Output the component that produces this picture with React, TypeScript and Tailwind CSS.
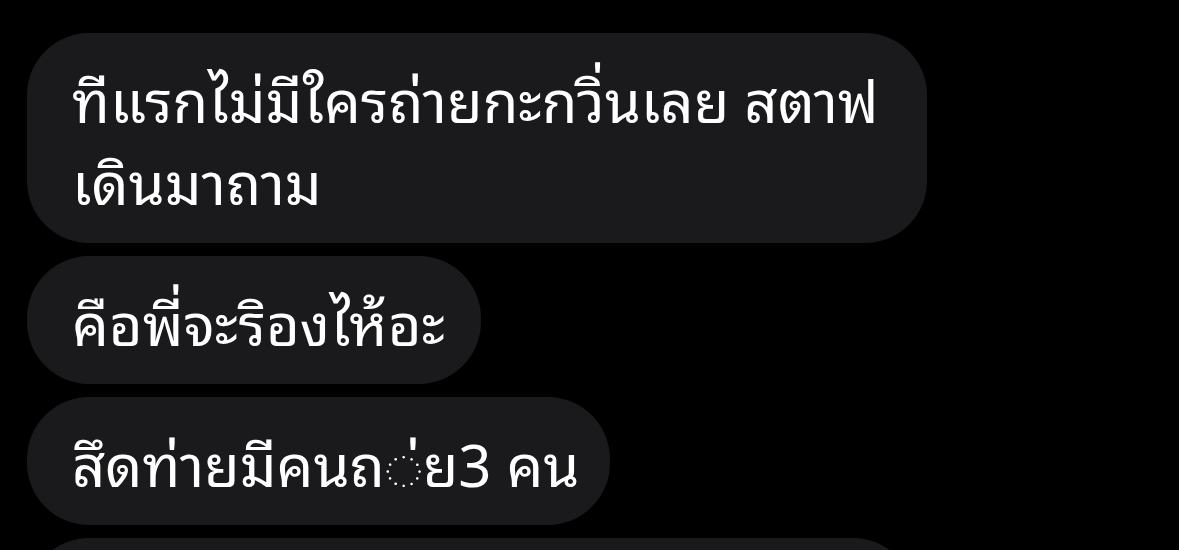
import React from "react";

const Bubble = ({ children, className = "" }: { children?: React.ReactNode; className?: string }) => (
  <div
    className={
      "rounded-[62px] bg-[#1a1a1c] pl-[45px] py-[23px] text-[58px] leading-[82px] text-white whitespace-nowrap " +
      className
    }
  >
    {children}
  </div>
);

export default function App() {
  return (
    <div
      className="w-[1179px] h-[550px] overflow-hidden bg-black pt-[33px] pl-[27px]"
      style={{ fontFamily: '"Noto Sans Thai Looped", "Noto Sans Thai", "Noto Sans", sans-serif' }}
    >
      <div className="flex flex-col items-start gap-[13px]">
        <Bubble className="w-[900px] pr-[44px]">
          <div>ทีแรกไม่มีใครถ่ายกะกวิ่นเลย สตาฟ</div>
          <div>เดินมาถาม</div>
        </Bubble>
        <Bubble className="pr-[36px]">คือพี่จะริองไห้อะ</Bubble>
        <Bubble className="pr-[30px]">สึดท่ายมีคนถ{"\u25CC\u0E48"}ย3 คน</Bubble>
        <Bubble className="w-[888px] h-[129px]" />
      </div>
    </div>
  );
}
